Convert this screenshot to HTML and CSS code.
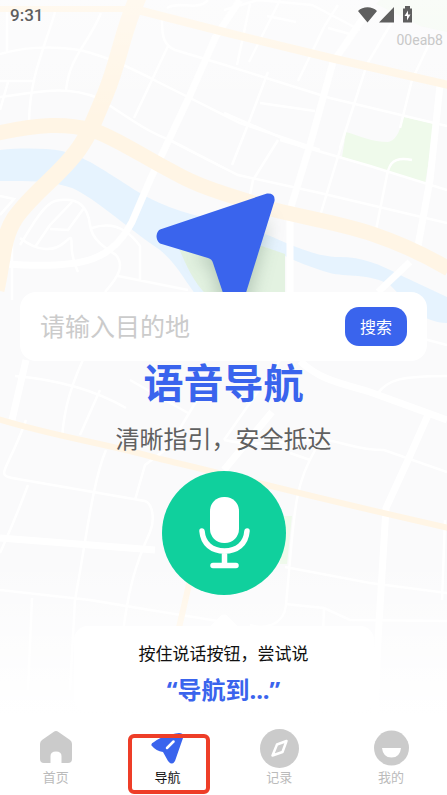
FILE: index.html
```html
<!DOCTYPE html>
<html lang="zh-CN">
<head>
<meta charset="utf-8">
<meta name="viewport" content="width=device-width, initial-scale=1">
<title>语音导航</title>
<link rel="stylesheet" href="styles.css">
</head>
<body>
<div class="screen">
  <svg class="map" viewBox="0 0 447 795" preserveAspectRatio="xMidYMin slice" aria-hidden="true">
    <defs>
      <linearGradient id="fade" x1="0" y1="0" x2="0" y2="1">
        <stop offset="0" stop-color="#fff" stop-opacity=".4"/>
        <stop offset=".15" stop-color="#fff" stop-opacity="0"/>
        <stop offset=".7" stop-color="#fff" stop-opacity="0"/>
        <stop offset=".9" stop-color="#fff"/>
      </linearGradient>
    </defs>
    <rect width="447" height="795" fill="#fafafb"/>
    <g fill="#effaeb">
      <path d="M346 132C360 136 372 142 388 142C398 140 400 128 404 117L435 124L425 184L342 157Z"/>
      <path d="M380 0H447V32L420 26L376 4Z" opacity=".5"/>
      <path d="M283 516H292L287 564H280Z"/>
    </g>
    <path fill="#e6f3fe" d="M0 150C20 148 45 148 62 151C90 158 110 175 140 193C165 208 195 216 225 222L265 234C290 244 310 255 335 257C360 256 380 264 400 275L447 297V323C420 322 410 305 390 285C370 273 345 277 330 273C305 266 285 256 265 247L240 300H200C185 282 178 265 160 250C130 230 95 198 72 188C50 180 25 181 0 181Z"/>
    <path fill="#e3f2e1" d="M178 246L215 248L262 246L285 254V300H212C195 285 188 270 178 246Z"/>
    <g fill="none" stroke="#fff" stroke-width="2.500">
      <path d="M0 54C20 48 50 45 80 50C110 58 125 65 160 83L240 123L320 150"/>
      <path d="M0 97C40 92 65 85 98 98C125 115 145 131 170 140L224 168"/>
      <path d="M55 12C44 50 30 75 29 122M101 13C88 45 70 55 66 90M0 81H34M7 6V52M8 82L0 110"/>
      <path d="M162 20C162 35 163 45 175 50L225 65L330 98L447 126M168 46L134 118M167 8C178 0 198 12 208 0"/>
      <path d="M250 4L237 65M280 0L249 62M338 5L325 25L298 81M392 22L367 64L340 148M430 42L412 80L400 128"/>
      <path d="M224 10L258 0L312 5L360 30M267 16L296 22M328 28L350 34M224 113L305 148M268 72L249 122L232 165M260 103L315 111"/>
      <path d="M165 138L238 175L320 193L447 223M278 140L253 180L250 195M343 140L320 216M280 140L370 166L447 190M412 160C390 155 388 168 386 180L376 230"/>
      <path d="M20 245C35 220 45 204 55 201C80 196 88 208 90 225C92 240 105 248 116 255C124 265 120 275 105 292M72 202L50 225L35 247M84 208L68 230L50 229M20 238C38 252 54 252 65 242C78 230 65 246 78 272M92 228C115 220 130 232 140 246V282M118 276L188 290M0 215L14 199L0 196M12 230V300"/>
      <path d="M15 376C60 380 95 390 126 408M90 345C70 385 64 410 62 438M100 390L80 435M26 420C8 470 -5 475 12 478L145 501C153 504 155 520 150 532C135 565 128 590 122 640M106 450C93 480 86 540 75 600L70 690M28 485C15 520 8 535 0 553M0 590L90 600L150 610L224 622M32 598L28 690M165 450L145 465L135 500"/>
      <path d="M130 380L188 413M200 395L170 445M280 360L224 440M224 440C260 448 285 440 310 440C340 438 350 450 384 450L447 472M378 393C388 380 400 376 447 376M390 330L447 345"/>
      <path d="M290 453L310 460M315 450C298 480 295 500 290 560L286 605C284 625 265 630 250 625M285 567L370 583L447 593M285 604L324 608L350 620L447 621M324 608L322 660M445 520L442 600"/>
    </g>
    <g fill="none" stroke="#fff" stroke-width="7">
      <path d="M216 36L190 95L150 180L132 222C112 258 90 270 5 264M240 0L216 36"/>
      <path d="M365 15L345 45L333 62L310 145L290 210M290 220V292M440 85L430 180L418 246M410 262L378 292"/>
      <path d="M26 360L12 420M300 361C320 380 340 383 370 392L447 420M428 415L408 460L386 508L378 640L375 715M0 538L155 550M272 412L224 470"/>
    </g>
    <g fill="none" stroke="#fff5e5">
      <path stroke-width="17" d="M139 -5C122 30 120 60 105 95S90 132 80 147C62 174 35 190 15 218C2 238 3 260 -4 290"/>
      <path stroke-width="15" d="M-2 133C40 124 65 123 92 130C115 137 145 158 175 173C205 190 240 198 275 210C330 224 375 226 449 269"/>
      <path stroke-width="6" d="M0 9H130"/>
      <path stroke-width="8" d="M130 8L224 32L335 59L449 85"/>
      <path stroke-width="6" d="M-2 419C60 438 110 444 160 459C230 475 280 490 449 528M190 580L178 632"/>
    </g>
    <rect width="447" height="795" fill="url(#fade)"/>
  </svg>

  <header class="status">
    <time class="clock">9:31</time>
    <div class="signals">
      <svg class="status-icons" viewBox="0 0 55 17" aria-hidden="true">
        <path fill="#5f5f5f" d="M0 5C5 0 14 0 19 5L9.500 16.500ZM21 16.500L36 1V16.500ZM45 2.500H47V0H52V2.500H54V16.500H45Z"/>
        <path fill="#fff" d="M50 4.500L46.500 10H49V14.500L52.500 8.500H50Z"/>
      </svg>
      <span class="device">00eab8</span>
    </div>
  </header>

  <main class="content">
    <svg class="pointer" viewBox="3 1 160 160" aria-hidden="true">
      <defs><filter id="soft" x="-30%" y="-30%" width="170%" height="170%"><feGaussianBlur stdDeviation="9"/></filter></defs>
      <path fill="#52705f" opacity=".34" filter="url(#soft)" d="M52 67L128 26L99 140H87L71 72Z"/>
      <path fill="#3a64ed" d="M19 37.500L126 1.500Q134.500 1 133.500 9L99 120Q94 134 89 122L72 71Q71 67 67 66L19 51.500Q15.500 49 15.500 44Q16 39 19 37.500Z"/>
    </svg>
    <form class="search">
      <input class="search-input" type="text" placeholder="请输入目的地" aria-label="请输入目的地">
      <button class="search-button" type="button">搜索</button>
    </form>
    <h1 class="title">语音导航</h1>
    <p class="subtitle">清晰指引，安全抵达</p>
    <button class="mic" type="button" aria-label="按住说话">
      <svg class="mic-icon" viewBox="0 0 124 124" aria-hidden="true">
        <rect x="48" y="26" width="29" height="46" rx="14" fill="#fff"/>
        <path d="M40 60C41 73 50 80 62.500 80S84 73 85 60M62.500 80V94M51 94.500H74" fill="none" stroke="#fff" stroke-width="5.500" stroke-linecap="round"/>
      </svg>
    </button>
    <section class="hint">
      <p class="hint-text">按住说话按钮，尝试说</p>
      <p class="hint-phrase">“导航到...”</p>
    </section>
  </main>

  <nav class="tabs">
    <a class="tab" href="#home">
      <svg class="tab-icon" viewBox="0 0 39 39" aria-hidden="true"><path fill="#cbcbcb" d="M17.500 3Q20 1 22.500 3L34 11Q36 12.500 36 15V30Q36 34 32 34H25.500V27Q25.500 22.500 20 22.500T14.500 27V34H8Q4 34 4 30V15Q4 12.500 6 11Z"/></svg>
      <span>首页</span>
    </a>
    <a class="tab active" href="#navigate">
      <svg class="tab-icon" viewBox="0 0 39 39" aria-hidden="true"><path fill="#3a64ed" d="M6 13C12 8 22 5 31 4Q36 4 35 9L27 32Q24 37 20 32L15 23Q8 22 4 17Q2 15 6 13Z"/><path d="M19 19L25.500 12.500" stroke="#fff" stroke-width="2.500" stroke-linecap="round"/></svg>
      <span>导航</span>
    </a>
    <a class="tab" href="#records">
      <svg class="tab-icon" viewBox="0 0 39 39" aria-hidden="true"><circle cx="19.500" cy="19.500" r="19.500" fill="#cbcbcb"/><path d="M26.500 12L17 15.500L12.500 26.500L22.500 23Z" fill="none" stroke="#fff" stroke-width="2.500" stroke-linejoin="round"/></svg>
      <span>记录</span>
    </a>
    <a class="tab" href="#mine">
      <svg class="tab-icon" viewBox="0 0 39 39" aria-hidden="true"><circle cx="19.500" cy="19" r="17.500" fill="#cbcbcb"/><path fill="#fff" d="M10 19H29Q28 28.500 19.500 28.500T10 19Z"/></svg>
      <span>我的</span>
    </a>
  </nav>
</div>
</body>
</html>
```
FILE: styles.css
```css
*, *::before, *::after { box-sizing: border-box; }

body {
  margin: 0;
  background: #fff;
  font-family: "Noto Sans CJK SC", sans-serif;
}

.screen {
  position: relative;
  min-height: 100vh;
  display: flex;
  flex-direction: column;
  overflow: hidden;
}

.map {
  position: absolute;
  inset: 0;
  width: 100%;
  height: 100%;
}

.status {
  position: relative;
  display: flex;
  justify-content: space-between;
  padding: 6px 4px 0 10px;
  font-family: Roboto, sans-serif;
}

.clock {
  font-size: 17px;
  font-weight: 500;
  line-height: 19px;
  color: #5f5f5f;
}

.signals {
  display: flex;
  flex-direction: column;
  align-items: flex-end;
  gap: 8px;
}

.status-icons {
  width: 55px;
  height: 17px;
  margin-right: 30px;
}

.device {
  font-size: 14px;
  line-height: 18px;
  color: #c8c8c8;
}

.content {
  position: relative;
  flex: 1;
  display: flex;
  flex-direction: column;
  align-items: center;
  padding: 144px 20px 0;
}

.pointer {
  width: 160px;
  height: 160px;
  margin-bottom: -61px;
}

.search {
  position: relative;
  align-self: stretch;
  display: flex;
  align-items: center;
  height: 69px;
  padding: 0 20px;
  border-radius: 16px;
  background: #fff;
}

.search-input {
  flex: 1;
  min-width: 0;
  padding: 0 0 4px;
  border: 0;
  outline: 0;
  background: transparent;
  font: inherit;
  font-size: 25px;
  line-height: 36px;
  color: #333;
}

.search-input::placeholder { color: #cbcbcb; }

.search-button {
  width: 62px;
  height: 39px;
  padding: 0 0 2px;
  border: 0;
  border-radius: 14px;
  background: #3a64ed;
  color: #fff;
  font: inherit;
  font-size: 16px;
}

.title {
  margin: 0;
  font-size: 40px;
  font-weight: 700;
  line-height: 40px;
  color: #3a64ed;
}

.subtitle {
  margin: 20px 0 16px;
  font-size: 24px;
  line-height: 34px;
  color: #606060;
}

.mic {
  width: 124px;
  height: 124px;
  padding: 0;
  border: 0;
  border-radius: 50%;
  background: #10d09d;
}

.mic-icon {
  display: block;
  width: 100%;
}

.hint {
  position: relative;
  width: 300px;
  max-width: 100%;
  margin-top: 31px;
  padding: 14px 0 4px;
  border-radius: 14px;
  background: #fff;
  text-align: center;
}

.hint::before {
  content: "";
  position: absolute;
  top: -9px;
  left: 50%;
  width: 22px;
  height: 22px;
  border-radius: 5px;
  background: #fff;
  transform: translateX(-50%) rotate(45deg);
}

.hint-text {
  position: relative;
  margin: 0;
  font-size: 17px;
  line-height: 26px;
  color: #111;
}

.hint-phrase {
  margin: 6px 0 0;
  font-family: "Noto Sans", "Noto Sans CJK SC", sans-serif;
  font-size: 24px;
  font-weight: 700;
  line-height: 36px;
  color: #3a64ed;
}

.tabs {
  position: relative;
  display: grid;
  grid-template-columns: repeat(4, 1fr);
  padding-bottom: 10px;
}

.tab {
  position: relative;
  display: flex;
  flex-direction: column;
  align-items: center;
  font-size: 13px;
  line-height: 17px;
  color: #bbb;
  text-decoration: none;
}

.tab-icon {
  width: 39px;
  height: 39px;
}

.active { color: #111; }

.active::after {
  content: "";
  position: absolute;
  top: 5px;
  left: 50%;
  width: 82px;
  height: 60px;
  margin-left: -40px;
  border: 4px solid #ee3e28;
  border-radius: 6px;
}
```
